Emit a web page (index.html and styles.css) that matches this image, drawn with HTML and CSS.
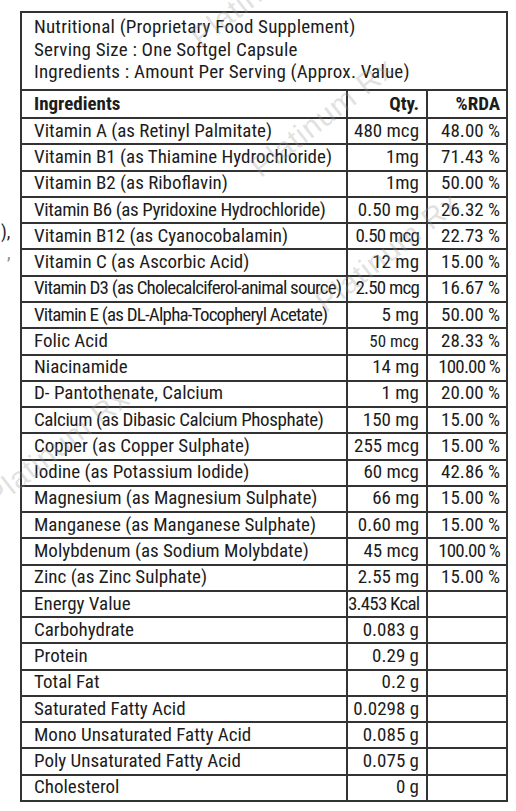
FILE: index.html
```html
<!DOCTYPE html>
<html lang="en">
<head>
<meta charset="UTF-8">
<meta name="viewport" content="width=device-width, initial-scale=1.0">
<title>Nutritional Information</title>
<link rel="stylesheet" href="styles.css">
</head>
<body>

<div class="label">
  <table class="facts">
    <colgroup>
      <col class="col-name">
      <col class="col-qty">
      <col class="col-rda">
    </colgroup>
    <tr class="intro">
      <td colspan="3">
        Nutritional (Proprietary Food Supplement)<br>
        Serving Size : One Softgel Capsule<br>
        Ingredients : Amount Per Serving (Approx. Value)
      </td>
    </tr>
    <tr class="head">
      <th class="name">Ingredients</th>
      <th class="qty">Qty.</th>
      <th class="rda">%RDA</th>
    </tr>
    <tr><td class="name">Vitamin A (as Retinyl Palmitate)</td><td class="qty">480 mcg</td><td class="rda">48.00 %</td></tr>
    <tr><td class="name">Vitamin B1 (as Thiamine Hydrochloride)</td><td class="qty">1mg</td><td class="rda">71.43 %</td></tr>
    <tr><td class="name">Vitamin B2 (as Riboflavin)</td><td class="qty">1mg</td><td class="rda">50.00 %</td></tr>
    <tr><td class="name snug">Vitamin B6 (as Pyridoxine Hydrochloride)</td><td class="qty">0.50 mg</td><td class="rda">26.32 %</td></tr>
    <tr><td class="name">Vitamin B12 (as Cyanocobalamin)</td><td class="qty tight">0.50 mcg</td><td class="rda">22.73 %</td></tr>
    <tr><td class="name">Vitamin C (as Ascorbic Acid)</td><td class="qty">12 mg</td><td class="rda">15.00 %</td></tr>
    <tr><td class="name tight">Vitamin D3 (as Cholecalciferol-animal source)</td><td class="qty tight">2.50 mcg</td><td class="rda">16.67 %</td></tr>
    <tr><td class="name tight">Vitamin E (as DL-Alpha-Tocopheryl Acetate)</td><td class="qty">5 mg</td><td class="rda">50.00 %</td></tr>
    <tr><td class="name">Folic Acid</td><td class="qty small">50 mcg</td><td class="rda">28.33 %</td></tr>
    <tr><td class="name">Niacinamide</td><td class="qty">14 mg</td><td class="rda tight">100.00 %</td></tr>
    <tr><td class="name">D- Pantothenate, Calcium</td><td class="qty">1 mg</td><td class="rda">20.00 %</td></tr>
    <tr><td class="name snug">Calcium (as Dibasic Calcium Phosphate)</td><td class="qty">150 mg</td><td class="rda">15.00 %</td></tr>
    <tr><td class="name">Copper (as Copper Sulphate)</td><td class="qty">255 mcg</td><td class="rda">15.00 %</td></tr>
    <tr><td class="name">Iodine (as Potassium Iodide)</td><td class="qty">60 mcg</td><td class="rda">42.86 %</td></tr>
    <tr><td class="name">Magnesium (as Magnesium Sulphate)</td><td class="qty">66 mg</td><td class="rda">15.00 %</td></tr>
    <tr><td class="name">Manganese (as Manganese Sulphate)</td><td class="qty">0.60 mg</td><td class="rda">15.00 %</td></tr>
    <tr><td class="name">Molybdenum (as Sodium Molybdate)</td><td class="qty">45 mcg</td><td class="rda tight">100.00 %</td></tr>
    <tr><td class="name">Zinc (as Zinc Sulphate)</td><td class="qty">2.55 mg</td><td class="rda">15.00 %</td></tr>
    <tr><td class="name">Energy Value</td><td class="qty tight">3.453 Kcal</td><td class="rda"></td></tr>
    <tr><td class="name">Carbohydrate</td><td class="qty">0.083 g</td><td class="rda"></td></tr>
    <tr><td class="name">Protein</td><td class="qty">0.29 g</td><td class="rda"></td></tr>
    <tr><td class="name">Total Fat</td><td class="qty">0.2 g</td><td class="rda"></td></tr>
    <tr><td class="name">Saturated Fatty Acid</td><td class="qty">0.0298 g</td><td class="rda"></td></tr>
    <tr><td class="name">Mono Unsaturated Fatty Acid</td><td class="qty">0.085 g</td><td class="rda"></td></tr>
    <tr><td class="name">Poly Unsaturated Fatty Acid</td><td class="qty">0.075 g</td><td class="rda"></td></tr>
    <tr><td class="name">Cholesterol</td><td class="qty">0 g</td><td class="rda"></td></tr>
  </table>

  <!-- bits of the neighbouring print, cut at the left edge -->
  <span class="stray stray-1">),</span>
  <span class="stray stray-2">,</span>

  <!-- faint watermark stamps over the label -->
  <span class="mark mark-1">Platinum Rx</span>
  <span class="mark mark-2">Platinum Rx</span>
  <span class="mark mark-3">Platinum Rx</span>
  <span class="mark mark-4">Platinum Rx</span>
</div>

</body>
</html>
```

FILE: styles.css
```css
* {
  box-sizing: border-box;
  padding: 0;
  margin: 0;
}

body {
  background: #fff;
  color: #1c1c1c;
  font-family: "Roboto Condensed", "Liberation Sans", sans-serif;
  font-size: 19px;
}

.label {
  position: relative;
  padding: 11px 0 0 20px;
  overflow: hidden;
  height: 811px;
}

.facts {
  width: 486px;
  border-collapse: collapse;
  border: 2px solid #333;
  table-layout: fixed;
}

.col-name { width: 326px; }
.col-qty { width: 80px; }
.col-rda { width: 80px; }

.facts td,
.facts th {
  border: 2px solid #333;
  height: 26.27px;
  line-height: 22px;
  padding: 0 5px 1px 12px;
  white-space: nowrap;
  font-weight: normal;
  vertical-align: middle;
}

.intro td {
  height: 77px;
  line-height: 22.7px;
  padding: 3px 12px 5px 12px;
  letter-spacing: 0.2px;
}

.head th {
  height: 28px;
  font-weight: bold;
}

.name {
  text-align: left;
}

.facts .qty {
  text-align: right;
  padding: 0 7px 1px 0;
}

.facts .rda {
  text-align: right;
  padding: 0 6px 1px 0;
}

.facts .small {
  font-size: 17px;
}

.facts .snug {
  letter-spacing: -0.4px;
}

.facts .tight {
  letter-spacing: -0.8px;
}

.stray {
  position: absolute;
  left: 1px;
  font-size: 18px;
}

.stray-1 { top: 221px; }
.stray-2 { top: 242px; left: 7px; color: #888; }

.mark {
  position: absolute;
  color: rgba(150, 150, 150, 0.3);
  font-family: "Liberation Sans", sans-serif;
  font-size: 30px;
  letter-spacing: 1px;
  white-space: nowrap;
  transform: rotate(-38deg);
  transform-origin: left bottom;
  pointer-events: none;
}

.mark-1 { left: 205px; top: 20px; }
.mark-2 { left: 265px; top: 150px; }
.mark-3 { left: 330px; top: 285px; }
.mark-4 { left: 0px; top: 480px; }
```
